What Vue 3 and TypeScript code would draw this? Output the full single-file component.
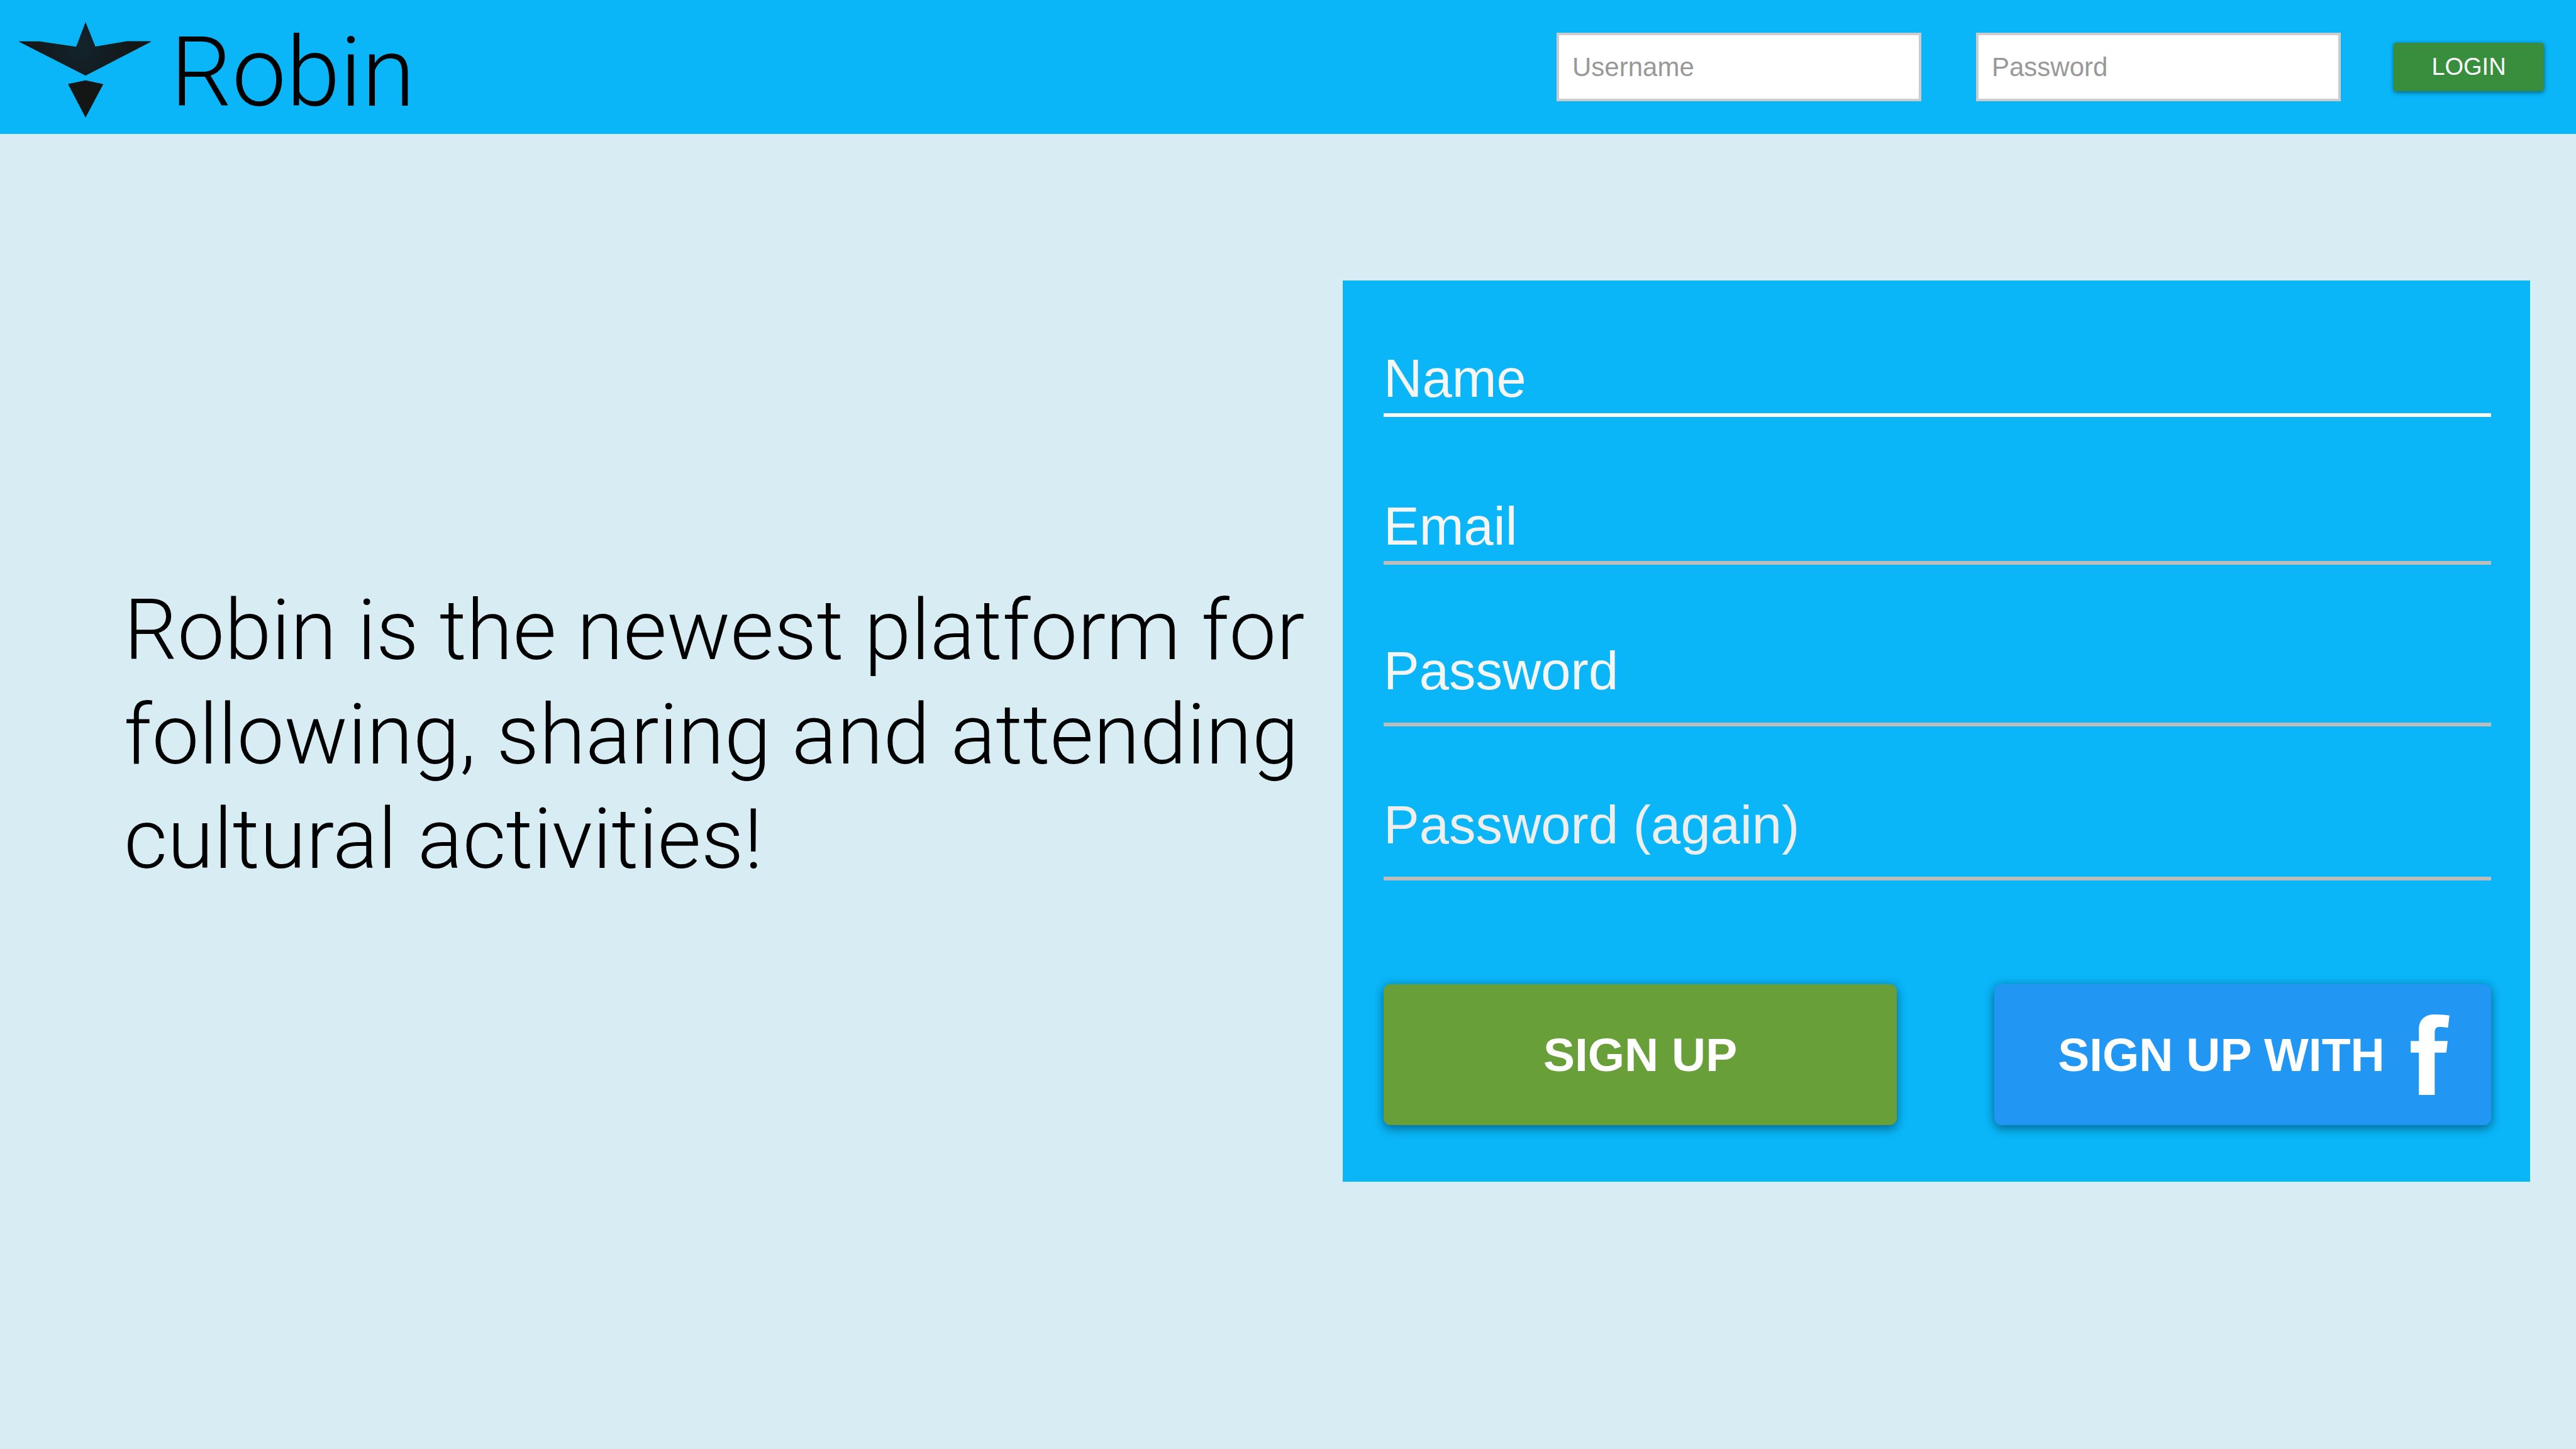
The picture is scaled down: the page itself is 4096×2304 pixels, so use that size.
<script setup lang="ts">
import { reactive } from 'vue'

interface Field {
  key: 'name' | 'email' | 'password' | 'passwordAgain'
  label: string
  type: string
}

const fields: Field[] = [
  { key: 'name', label: 'Name', type: 'text' },
  { key: 'email', label: 'Email', type: 'email' },
  { key: 'password', label: 'Password', type: 'password' },
  { key: 'passwordAgain', label: 'Password (again)', type: 'password' },
]

const login = reactive({ username: '', password: '' })
const signup = reactive({ name: '', email: '', password: '', passwordAgain: '' })
</script>

<template>
  <div class="page">
    <header class="topbar">
      <a class="brand" href="#">
        <svg class="bird" viewBox="66 57 891 641" aria-hidden="true">
          <defs>
            <radialGradient id="plumage" gradientUnits="userSpaceOnUse" cx="480" cy="220" r="380">
              <stop offset="0" stop-color="#12242c" />
              <stop offset="1" stop-color="#141616" />
            </radialGradient>
          </defs>
          <path
            fill="url(#plumage)"
            d="M518 57 L584 221 L796 185 L957 185 L957 190 L518 417 L66 186 L208 186 L455 222 Z"
          />
          <path fill="#141616" d="M518 448 L637 474 L518 698 L400 473 Z" />
        </svg>
        <span class="wordmark">Robin</span>
      </a>
      <form class="login" @submit.prevent>
        <div class="credentials">
          <input v-model="login.username" class="login-input" type="text" placeholder="Username" aria-label="Username" />
          <input v-model="login.password" class="login-input" type="password" placeholder="Password" aria-label="Password" />
        </div>
        <button class="login-button" type="submit">LOGIN</button>
      </form>
    </header>

    <main class="content">
      <h1 class="pitch">Robin is the newest platform for following, sharing and attending cultural activities!</h1>

      <form class="card" @submit.prevent>
        <input
          v-for="field in fields"
          :key="field.key"
          v-model="signup[field.key]"
          class="field"
          :class="field.key"
          :type="field.type"
          :placeholder="field.label"
          :aria-label="field.label"
        />
        <div class="actions">
          <button class="action signup" type="submit">SIGN UP</button>
          <button class="action facebook" type="button">
            <span>SIGN UP WITH</span>
            <svg class="facebook-mark" viewBox="93 85 260 540" aria-label="Facebook" role="img">
              <path
                fill="#fff"
                d="M148 625 V341 H93 V263 H148 V180 C148 122 190 85 250 85 C290 85 325 88 353 92 L343 175 C325 171 305 168 288 168 C262 168 254 182 254 208 V263 H341 L332 341 H254 V625 Z"
              />
            </svg>
          </button>
        </div>
      </form>
    </main>
  </div>
</template>

<style>
body {
  background: #d8ecf3;
}
</style>

<style scoped>
.page {
  min-height: 100vh;
  background: #d8ecf3;
  font-family: 'Liberation Sans', Arial, sans-serif;
}

.page * {
  box-sizing: border-box;
}

.topbar {
  display: flex;
  align-items: center;
  justify-content: space-between;
  height: 213px;
  padding: 0 51px 0 29px;
  background: #0ab6f8;
}

.brand {
  display: flex;
  align-items: flex-end;
  gap: 31px;
  padding-top: 8px;
  color: #000;
  text-decoration: none;
}

.bird {
  display: block;
  width: 211px;
  height: 152px;
}

.wordmark {
  font-family: Roboto, 'Liberation Sans', sans-serif;
  font-size: 154px;
  font-weight: 300;
  line-height: 143px;
}

.login {
  display: flex;
  align-items: center;
  gap: 84px;
}

.credentials {
  display: flex;
  gap: 87px;
}

.login-input {
  width: 580px;
  height: 109px;
  padding: 0 21px;
  border: 4px solid #ccc;
  border-radius: 0;
  background: #fff;
  color: #333;
  font-family: inherit;
  font-size: 42px;
}

.login-input::placeholder {
  color: #999;
  opacity: 1;
}

.login-button {
  width: 239px;
  height: 77px;
  padding: 0;
  border: 0;
  border-radius: 4px;
  background: #388e3c;
  box-shadow: 0 0 6px rgba(0, 0, 0, 0.2), 0 3px 6px rgba(0, 0, 0, 0.3);
  color: #fff;
  font-family: inherit;
  font-size: 38px;
}

.content {
  display: grid;
  grid-template-columns: 1fr 1fr;
  gap: 50px;
  align-items: center;
  padding: 233px 73px 0 197px;
}

.pitch {
  margin: 0;
  padding-top: 12px;
  color: #000;
  font-family: Roboto, 'Liberation Sans', sans-serif;
  font-size: 134px;
  font-weight: 300;
  line-height: 166px;
}

.card {
  display: flex;
  flex-direction: column;
  padding: 106px 62px 90px 65px;
  background: #0ab6f8;
}

.field {
  width: 100%;
  height: 111px;
  margin: 0 0 124px;
  padding: 0 0 6px;
  border: 0;
  border-bottom: 6px solid #bdbdbd;
  border-radius: 0;
  background: transparent;
  color: #f5f5f5;
  font-family: inherit;
  font-size: 85px;
}

.field::placeholder {
  color: #f5f5f5;
  opacity: 1;
}

.field.name {
  border-bottom-color: #fafafa;
}

.field.email {
  margin-bottom: 120px;
}

.field.password,
.field.passwordAgain {
  height: 137px;
  margin-bottom: 108px;
  padding-bottom: 33px;
}

.field.passwordAgain {
  margin-bottom: 165px;
}

.field.passwordAgain::placeholder {
  color: #eee;
}

.actions {
  display: grid;
  grid-template-columns: 31fr 30fr;
  gap: 155px;
}

.action {
  display: flex;
  align-items: center;
  justify-content: center;
  height: 224px;
  padding: 0;
  border: 0;
  border-radius: 11px;
  box-shadow: 0 0 16px rgba(0, 0, 0, 0.2), 0 7px 16px rgba(0, 0, 0, 0.3);
  color: #fff;
  font-family: inherit;
  font-size: 75px;
  font-weight: 700;
  white-space: nowrap;
}

.signup {
  background: #689f38;
}

.facebook {
  justify-content: space-between;
  padding: 0 66px 0 101px;
  background: #2196f3;
}

.facebook-mark {
  display: block;
  width: 62px;
  height: 128px;
}
</style>
